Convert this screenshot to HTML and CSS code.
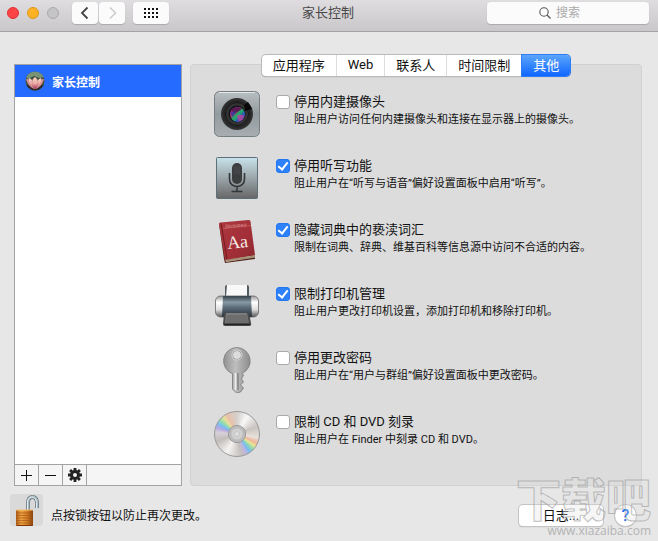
FILE: index.html
```html
<!DOCTYPE html>
<html lang="zh-CN">
<head>
    <meta charset="UTF-8">
    <meta name="viewport" content="width=device-width, initial-scale=1.0">
    <title>家长控制</title>
    <link rel="stylesheet" href="styles.css">
</head>
<body>
    <header class="titlebar">
        <div class="controls">
            <div class="lights">
                <button class="light red" aria-label="关闭"></button>
                <button class="light yellow" aria-label="最小化"></button>
                <button class="light gray" aria-label="缩放" disabled></button>
            </div>
            <div class="nav">
                <button class="tool" aria-label="后退">
                    <svg width="26" height="22" viewBox="0 0 26 22"><path d="M15.500 5.500 10 11l5.500 5.500" fill="none" stroke="#444" stroke-width="1.8"/></svg>
                </button>
                <button class="tool" aria-label="前进" disabled>
                    <svg width="26" height="22" viewBox="0 0 26 22"><path d="M11 5.500 16.500 11 11 16.500" fill="none" stroke="#ccc" stroke-width="1.6"/></svg>
                </button>
            </div>
            <button class="tool grid-btn" aria-label="显示全部">
                <svg width="14" height="10" viewBox="0 0 14 10"><path d="M0 1h14M0 5h14M0 9h14" stroke="#111" stroke-width="2" stroke-dasharray="2 2"/></svg>
            </button>
        </div>
        <h1>家长控制</h1>
        <label class="search">
            <svg width="12" height="12" viewBox="0 0 12 12"><circle cx="5" cy="5" r="4.200" fill="none" stroke="#555" stroke-width="1.1"/><path d="m8 8 3.500 3.500" stroke="#555" stroke-width="1.3"/></svg>
            <input type="text" placeholder="搜索" aria-label="搜索">
        </label>
    </header>

    <main class="content">
        <aside class="sidebar">
            <button class="user">
                <svg width="20" height="20" viewBox="0 0 20 20">
                    <defs>
                        <clipPath id="round"><circle cx="10" cy="10" r="9.500"/></clipPath>
                        <linearGradient id="petal" x1="0" y1="0" x2="0" y2="1"><stop offset="0" stop-color="#f8dcc8"/><stop offset=".55" stop-color="#eba9a5"/><stop offset="1" stop-color="#a42b56"/></linearGradient>
                    </defs>
                    <g clip-path="url(#round)">
                        <rect width="20" height="20" fill="#42513b"/>
                        <path d="M0 5 6 0h9l5 6-6 1-5-2-6 3z" fill="#789477"/>
                        <path d="M0 15c6-2 14-2 20 0v5H0z" fill="#302a2b"/>
                        <path d="M10 18C5 17 2 12 1 8c3 0 5 2 6 3zM10 18c5-1 8-6 9-10-3 0-5 2-6 3z" fill="#d98e93"/>
                        <path d="M10 18C5 14 3 10 4 7c4 2 6 6 6 11zM10 18c5-4 7-8 6-11-4 2-6 6-6 11z" fill="url(#petal)"/>
                        <path d="M10 18C6 13 6 9 10 6c4 3 4 7 0 12z" fill="url(#petal)" stroke="#b97172" stroke-width=".4"/>
                    </g>
                </svg>
                家长控制
            </button>
            <div class="actions">
                <button aria-label="添加"><svg width="11" height="11" viewBox="0 0 11 11"><path d="M0 5.500h11M5.500 0v11" stroke="#111" stroke-width="1"/></svg></button>
                <button aria-label="移除"><svg width="11" height="11" viewBox="0 0 11 11"><path d="M0 5.500h11" stroke="#111" stroke-width="1"/></svg></button>
                <button aria-label="操作">
                    <svg width="14" height="14" viewBox="-7 -7 14 14">
                        <circle r="3.500" fill="none" stroke="#222" stroke-width="3"/>
                        <path d="M0-7V-4M0 4V7M-7 0H-4M4 0H7M-4.900-4.900-3-3M3 3 4.900 4.900M-4.900 4.900-3 3M3-3 4.900-4.900" stroke="#222" stroke-width="2.800"/>
                    </svg>
                </button>
            </div>
        </aside>

        <section class="panel">
            <div class="tabs" role="tablist">
                <button role="tab">应用程序</button>
                <button role="tab">Web</button>
                <button role="tab">联系人</button>
                <button role="tab">时间限制</button>
                <button role="tab" class="active" aria-selected="true">其他</button>
            </div>

            <div class="options">
                <div class="option">
                    <svg class="icon" viewBox="0 0 46 46">
                        <defs>
                            <linearGradient id="metal" x1="0" y1="0" x2="0" y2="1"><stop offset="0" stop-color="#b9bfc3"/><stop offset=".5" stop-color="#929b9f"/><stop offset="1" stop-color="#a8aeb1"/></linearGradient>
                            <radialGradient id="ring"><stop offset=".5" stop-color="#111"/><stop offset=".72" stop-color="#444"/><stop offset=".78" stop-color="#222"/><stop offset="1" stop-color="#393939"/></radialGradient>
                            <linearGradient id="lens" x1="0" y1="0" x2="1" y2="1"><stop offset="0" stop-color="#6d2c90"/><stop offset=".3" stop-color="#b4286a"/><stop offset=".5" stop-color="#29a65b"/><stop offset=".7" stop-color="#2559bd"/><stop offset="1" stop-color="#c33c92"/></linearGradient>
                        </defs>
                        <rect x=".5" y=".5" width="45" height="45" rx="5" fill="url(#metal)" stroke="#777e82"/>
                        <path d="M5 1.500h36" stroke="#e2e7e9"/>
                        <circle cx="23" cy="23" r="16" fill="url(#ring)"/>
                        <circle cx="23" cy="23" r="11.500" fill="#333" stroke="#151515"/>
                        <path d="m30 14 4-3 4 7-7 2z" fill="#080808"/>
                        <circle cx="23" cy="23" r="8.500" fill="#15131d"/>
                        <circle cx="23.500" cy="23.500" r="7.500" fill="url(#lens)"/>
                        <path d="m17 18 7-2 4 2-8 5z" fill="#5a1c55"/>
                        <path d="m18 27 10-9 1 2-8 10z" fill="#24a879" opacity=".7"/>
                        <path d="m23 24 7 0-2 5-4 1z" fill="#d04195" opacity=".7"/>
                        <path d="m16 22 6-2-3 6z" fill="#2a3caf" opacity=".75"/>
                    </svg>
                    <div class="text">
                        <label><input type="checkbox" aria-describedby="d1">停用内建摄像头</label>
                        <p id="d1">阻止用户访问任何内建摄像头和连接在显示器上的摄像头。</p>
                    </div>
                </div>

                <div class="option">
                    <svg class="icon" viewBox="0 0 46 46">
                        <defs><linearGradient id="dict" x1="0" y1="0" x2="0" y2="1"><stop offset="0" stop-color="#c7e2eb"/><stop offset=".5" stop-color="#9ba6aa"/><stop offset="1" stop-color="#666"/></linearGradient></defs>
                        <rect x="2.500" y="2.500" width="41" height="41" rx="1" fill="url(#dict)" stroke="#5e6f78"/>
                        <rect x="18" y="8" width="10" height="21" rx="5" fill="#3b3d3f"/>
                        <path d="M15.500 18v6c0 10 15 10 15 0v-6M23 32v4.500M17.500 36.500h11" fill="none" stroke="#343638" stroke-width="1.600"/>
                        <path d="M20 12h6M20 14h6M20 16h6M20 18h6" stroke="#55585a" stroke-width=".6"/>
                    </svg>
                    <div class="text">
                        <label><input type="checkbox" aria-describedby="d2" checked>停用听写功能</label>
                        <p id="d2">阻止用户在“听写与语音”偏好设置面板中启用“听写”。</p>
                    </div>
                </div>

                <div class="option">
                    <svg class="icon" viewBox="0 0 46 46">
                        <defs><linearGradient id="book" x1="0" y1="0" x2="1" y2="1"><stop offset="0" stop-color="#ad3a40"/><stop offset=".6" stop-color="#a22f38"/><stop offset="1" stop-color="#8b2830"/></linearGradient></defs>
                        <path d="m5 5 5 35 1 4 30-4V36z" fill="#54251f"/>
                        <path d="m11 40 30-4v2.500L12 43z" fill="#c9b99b"/>
                        <path d="m12 41 29-4M12 42l29-4" stroke="#77644f" stroke-width=".5"/>
                        <path d="M6.500 3.500 34.500 1c1 0 2 .5 2 1.500L41 36 11 41 5 5c0-1 .5-1.500 1.500-1.500z" fill="url(#book)"/>
                        <path d="m7 4 6 36" stroke="#7e1d25" stroke-width="1.200"/>
                        <path d="m9 9.500 28-3" stroke="#d06a69" stroke-width=".7"/>
                        <g transform="rotate(-6 23 23)" fill="#f5e9e4" font-family="Liberation Serif, serif">
                            <text x="13" y="8" font-size="5" fill="#e3aaa5">Dictionary</text>
                            <text x="13" y="29" font-size="18">Aa</text>
                        </g>
                    </svg>
                    <div class="text">
                        <label><input type="checkbox" aria-describedby="d3" checked>隐藏词典中的亵渎词汇</label>
                        <p id="d3">限制在词典、辞典、维基百科等信息源中访问不合适的内容。</p>
                    </div>
                </div>

                <div class="option">
                    <svg class="icon" viewBox="0 0 46 46">
                        <defs>
                            <linearGradient id="side" x1="0" y1="0" x2="0" y2="1"><stop offset="0" stop-color="#999"/><stop offset=".3" stop-color="#fff"/><stop offset=".65" stop-color="#ddd"/><stop offset="1" stop-color="#555"/></linearGradient>
                            <linearGradient id="drum" x1="0" y1="0" x2="0" y2="1"><stop offset="0" stop-color="#35414a"/><stop offset=".3" stop-color="#8799a5"/><stop offset=".55" stop-color="#5c6b78"/><stop offset="1" stop-color="#27323a"/></linearGradient>
                        </defs>
                        <path d="M11 4q0-2 2-2h20q2 0 2 2v11H11z" fill="#545b60"/>
                        <path d="M13 2h20v12H12z" fill="#f8f8f8"/>
                        <rect x="1.500" y="13" width="43" height="21" rx="5" fill="url(#side)" stroke="#666" stroke-width=".8"/>
                        <path d="M9 13h28l1 21H8z" fill="url(#drum)"/>
                        <path d="m10 30-1 11q0 2 2 2h24q3 0 2-3l-2-10z" fill="#494949"/>
                        <path d="m12 30-1 10h24l-2-10z" fill="#7c7c7c"/>
                        <path d="M13 33h20M12.500 35h21M12 37h22M12 39h23" stroke="#555" stroke-width=".7"/>
                        <path d="M10 41.500h26" stroke="#222"/>
                    </svg>
                    <div class="text">
                        <label><input type="checkbox" aria-describedby="d4" checked>限制打印机管理</label>
                        <p id="d4">阻止用户更改打印机设置，添加打印机和移除打印机。</p>
                    </div>
                </div>

                <div class="option">
                    <svg class="icon" viewBox="0 0 46 46">
                        <defs><linearGradient id="key" x1="0" y1="0" x2="1" y2="0"><stop offset="0" stop-color="#929292"/><stop offset=".45" stop-color="#bebebe"/><stop offset="1" stop-color="#8c8c8c"/></linearGradient></defs>
                        <path fill-rule="evenodd" d="M23 .5a13.500 13.500 0 0 0-4.500 26.200V42l4 4 4-1 3-4-3-3 3-3-2-3 2-4-1.500-1.600A13.500 13.500 0 0 0 23 .5zm0 3a4.500 4.500 0 1 1 0 9 4.500 4.500 0 0 1 0-9z" fill="url(#key)" stroke="#777" stroke-width=".8"/>
                        <circle cx="23" cy="8" r="5" fill="none" stroke="#d6d6d6"/>
                        <path d="M21.500 26v17" stroke="#eee" stroke-width="1.600"/>
                        <path d="M24 26v17" stroke="#777" stroke-width="1.200"/>
                    </svg>
                    <div class="text">
                        <label><input type="checkbox" aria-describedby="d5">停用更改密码</label>
                        <p id="d5">阻止用户在“用户与群组”偏好设置面板中更改密码。</p>
                    </div>
                </div>

                <div class="option">
                    <div class="icon disc">
                        <svg viewBox="0 0 46 46"><circle cx="23" cy="23" r="9" fill="#bdbdbd" stroke="#969696"/><circle cx="23" cy="23" r="6.500" fill="#d0d0d0" stroke="#b5b5b5"/><circle cx="23" cy="23" r="2.500" fill="#e1e1e1" stroke="#c4c4c4"/></svg>
                    </div>
                    <div class="text">
                        <label><input type="checkbox" aria-describedby="d6">限制 CD 和 DVD 刻录</label>
                        <p id="d6">阻止用户在 Finder 中刻录 CD 和 DVD。</p>
                    </div>
                </div>
            </div>
        </section>
    </main>

    <footer class="footer">
        <button class="lock" aria-label="锁">
            <svg width="33" height="32" viewBox="0 0 33 32">
                <defs>
                    <linearGradient id="gold" x1="0" y1="0" x2="1" y2="0"><stop offset="0" stop-color="#ad5c16"/><stop offset=".3" stop-color="#f2a444"/><stop offset=".65" stop-color="#d37d25"/><stop offset="1" stop-color="#8b420d"/></linearGradient>
                </defs>
                <path d="M18 17V8.500c0-7.500 9-7.500 9 0V14" fill="none" stroke="#63727b" stroke-width="4"/>
                <path d="M18 17V8.500c0-7.500 9-7.500 9 0V14" fill="none" stroke="#a9b8c0" stroke-width="2.600"/>
                <path d="M17.500 17V8.500c0-7 8.500-7.500 9 0V14" fill="none" stroke="#e6eef1" stroke-width="1"/>
                <rect x="6" y="16" width="17" height="16" rx="1" fill="url(#gold)"/>
                <path d="M6 19h17M6 21.500h17M6 24h17M6 26.500h17M6 29h17" stroke="#9c5112" stroke-width=".6"/>
                <path d="M6.500 16h16" stroke="#f7c574"/>
                <path d="M6.500 31.500h16" stroke="#7a350b"/>
            </svg>
        </button>
        <p>点按锁按钮以防止再次更改。</p>
        <button class="log">日志...</button>
        <button class="help" aria-label="帮助">?</button>
        <div class="watermark">
            <span class="name">下载吧</span>
            <span class="site">www.xiazaiba.com</span>
        </div>
    </footer>
</body>
</html>
```
FILE: styles.css
```css
* {
    box-sizing: border-box;
}
body {
    margin: 0;
    min-height: 100vh;
    background-color: #e7e7e7;
    color: #111;
    font-family: Roboto, "Noto Sans CJK SC", sans-serif;
    font-size: 13px;
}
h1, p {
    margin: 0;
}
button {
    display: flex;
    align-items: center;
    justify-content: center;
    padding: 0;
    border: none;
    background: none;
    color: inherit;
    font: inherit;
}
svg {
    display: block;
}

/* title bar */
.titlebar {
    display: grid;
    grid-template-columns: 1fr auto 1fr;
    align-items: start;
    height: 32px;
    padding: 2px 9px 0 7px;
    background: linear-gradient(#dfdde0, #c9c7ca);
    border-bottom: 1px solid #a5a3a6;
}
.titlebar h1 {
    font-size: 13px;
    font-weight: 400;
    line-height: 22px;
    color: #484848;
}
.controls, .lights, .nav {
    display: flex;
    align-items: center;
}
.lights {
    gap: 8px;
    margin-right: 13px;
}
.light {
    width: 12px;
    height: 12px;
    border-radius: 50%;
}
.red {
    background-color: #fc4444;
    border: 1px solid #df3238;
}
.yellow {
    background-color: #fdb124;
    border: 1px solid #de981c;
}
.gray {
    background-color: #c4c3c5;
    border: 1px solid #aaa9ab;
}
.nav {
    gap: 1px;
    margin-right: 8px;
}
.tool {
    width: 26px;
    height: 22px;
    background-color: #fbfbfb;
    border-radius: 4px;
    box-shadow: 0 1px 1px #aaa;
}
.grid-btn {
    width: 36px;
}
.search {
    display: flex;
    align-items: center;
    justify-self: end;
    gap: 5px;
    width: 162px;
    height: 22px;
    padding-left: 52px;
    background-color: #fbfbfb;
    border-radius: 4px;
    box-shadow: 0 1px 1px #aaa;
}
.search input {
    flex: 1;
    min-width: 0;
    padding: 0;
    border: none;
    outline: none;
    background: none;
    font: inherit;
    font-size: 12px;
}
.search input::placeholder {
    color: #aaa;
}

/* user list */
.content {
    display: flex;
    gap: 8px;
    padding: 32px 16px 8px 14px;
}
.sidebar {
    display: flex;
    flex-direction: column;
    width: 168px;
    border: 1px solid #a3a3a3;
    background-color: #fff;
}
.user {
    justify-content: flex-start;
    gap: 7px;
    height: 32px;
    padding-left: 10px;
    background-color: #266bff;
    color: #fff;
    font-size: 12px;
    font-weight: 700;
}
.actions {
    display: flex;
    height: 21px;
    margin-top: auto;
    border-top: 1px solid #a3a3a3;
    background-color: #f5f5f5;
}
.actions button {
    width: 24px;
    border-right: 1px solid #a3a3a3;
}

/* settings */
.panel {
    flex: 1;
    padding: 0 23px 28px;
    background-color: #dcdcdc;
    border: 1px solid #d0d0d0;
    border-radius: 4px;
}
.tabs {
    display: flex;
    width: fit-content;
    height: 21px;
    margin: -10px auto 15px;
    background-color: #fff;
    border-radius: 4px;
    box-shadow: 0 0 0 1px #b9b9b9, 0 1px 1px #888;
}
.tabs button {
    padding: 0 11px 2px;
    border-right: 1px solid #ddd;
}
.tabs .active {
    border: none;
    border-radius: 0 4px 4px 0;
    background: linear-gradient(#5aa5fb, #0f66ff);
    box-shadow: 0 0 0 1px #2f7cf5;
    color: #fff;
}
.options {
    display: grid;
    gap: 18px;
}
.option {
    display: flex;
    gap: 16px;
}
.icon {
    flex: none;
    width: 46px;
    height: 46px;
}
.disc {
    border: 1px solid #999;
    border-radius: 50%;
    background: conic-gradient(#d4d0cc, #f8f8f8 30deg, #c9c3bf 70deg, #e8e2dc 100deg, #efb59a 114deg, #e8e695 124deg, #95d9ac 133deg, #76bdf0 144deg, #c3b4dd 156deg, #c4bfbd 168deg, #f5f3f2 210deg, #c1bdba 250deg, #d8d0d8 275deg, #b3a6e2 288deg, #76c2f0 299deg, #9bdda6 310deg, #eadf9c 321deg, #e9c0a7 331deg, #d4d0cc);
}
.text {
    padding-top: 2px;
}
.text label {
    display: flex;
    align-items: center;
    gap: 4px;
    line-height: 18px;
}
.text p {
    padding-left: 18px;
    font-size: 11px;
    line-height: 18px;
}
.text input {
    display: flex;
    align-items: center;
    justify-content: center;
    appearance: none;
    width: 14px;
    height: 14px;
    margin: 0;
    background-color: #fff;
    border: 1px solid #aaa;
    border-radius: 3px;
}
.text input:checked {
    background-color: #2d81fb;
    border-color: #2477f2;
}
.text input:checked::after {
    content: "";
    box-sizing: border-box;
    width: 6px;
    height: 10px;
    margin-bottom: 2px;
    border: solid #fff;
    border-width: 0 2px 2px 0;
    transform: rotate(38deg);
}

/* bottom row */
.footer {
    position: relative;
    display: flex;
    align-items: flex-end;
    padding: 0 22px 0 10px;
}
.lock {
    width: 33px;
    height: 32px;
    background-color: #d9d9d9;
    border-radius: 4px;
}
.footer p {
    margin: 0 auto 0 8px;
    font-size: 12px;
    line-height: 20px;
}
.log, .help {
    height: 21px;
    background-color: #fff;
    box-shadow: 0 0 0 1px #c4c4c4, 0 1px 1px #999;
}
.log {
    width: 84px;
    margin-right: 12px;
    padding-bottom: 2px;
    border-radius: 4px;
}
.help {
    width: 21px;
    border-radius: 50%;
    color: #1a6cf0;
    font-size: 16px;
    font-weight: 500;
}
.watermark {
    position: absolute;
    right: 7px;
    bottom: -12px;
    display: flex;
    flex-direction: column;
    align-items: flex-end;
    pointer-events: none;
}
.name {
    color: rgba(225, 225, 225, .3);
    font-size: 45px;
    font-weight: 900;
    line-height: 44px;
    -webkit-text-stroke: 1px rgba(150, 150, 150, .6);
}
.site {
    color: #b4b4b4;
    font-family: "Open Sans", sans-serif;
    font-size: 12px;
    line-height: 14px;
}
```
